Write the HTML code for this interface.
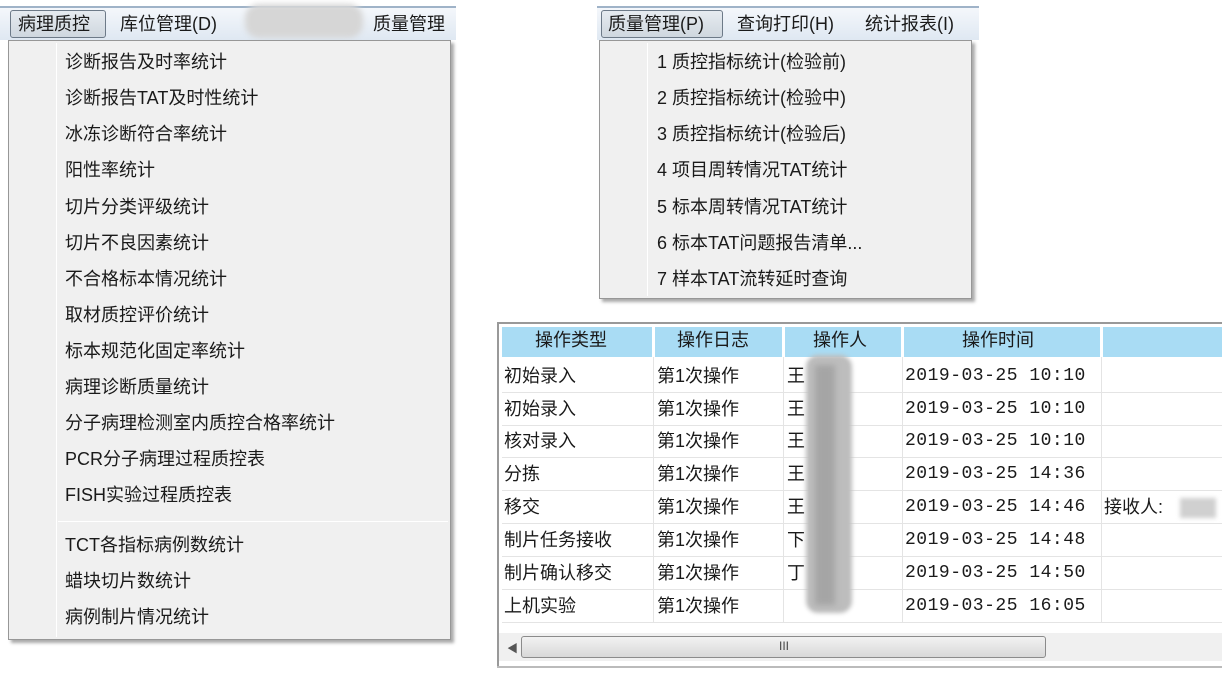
<!DOCTYPE html>
<html><head><meta charset="utf-8"><style>
*{margin:0;padding:0;box-sizing:border-box}
body{width:1222px;height:675px;background:#fff;position:relative;overflow:hidden;font-family:"Liberation Sans","Noto Sans CJK SC",sans-serif;color:#1a1a1a}
.a{position:absolute;white-space:nowrap}
.bar{position:absolute;background:linear-gradient(#f4f7fb,#dfe8f2);border-top:2px solid #9fb3c8}
.btn{position:absolute;border:1px solid #6d7a88;border-radius:3px;background:linear-gradient(#e6ebf0,#cfd7df)}
.menu{position:absolute;background:#f0f0f0;border:1px solid #979797;box-shadow:3px 3px 3px #aaa}
.gut{position:absolute;top:2px;bottom:2px;width:1px;background:#e0e0e0;border-right:1px solid #fff}
.mi{position:absolute;font-size:18px;line-height:22px}
.t{font-size:18px;line-height:22px}
.m{font-family:"Liberation Mono",monospace;font-size:18px;line-height:22px;letter-spacing:0.5px}
.r{position:absolute;left:502px;width:720px;height:33px}
.r div{position:absolute;top:0;white-space:nowrap;font-size:18px;line-height:22px}
</style></head><body>
<div class="bar" style="left:0;top:6px;width:456px;height:34px"></div>
<div class="btn" style="left:10px;top:10px;width:96px;height:28px"></div>
<div class="a t" style="left:18px;top:13px">病理质控</div>
<div class="a t" style="left:120px;top:13px">库位管理(D)</div>
<div class="a" style="left:245px;top:4px;width:118px;height:34px;background:#d6d6d6;border-radius:14px;filter:blur(3px)"></div>
<div class="a t" style="left:373px;top:13px">质量管理</div>
<div class="menu" style="left:8px;top:40px;width:443px;height:600px">
<div class="gut" style="left:47px"></div>
<div class="a" style="left:49px;top:480px;right:2px;height:1px;background:#d6d6d6;border-bottom:1px solid #fff"></div>
<div class="mi" style="left:56px;top:10px">诊断报告及时率统计</div>
<div class="mi" style="left:56px;top:46px">诊断报告TAT及时性统计</div>
<div class="mi" style="left:56px;top:82px">冰冻诊断符合率统计</div>
<div class="mi" style="left:56px;top:118px">阳性率统计</div>
<div class="mi" style="left:56px;top:155px">切片分类评级统计</div>
<div class="mi" style="left:56px;top:191px">切片不良因素统计</div>
<div class="mi" style="left:56px;top:227px">不合格标本情况统计</div>
<div class="mi" style="left:56px;top:263px">取材质控评价统计</div>
<div class="mi" style="left:56px;top:299px">标本规范化固定率统计</div>
<div class="mi" style="left:56px;top:335px">病理诊断质量统计</div>
<div class="mi" style="left:56px;top:371px">分子病理检测室内质控合格率统计</div>
<div class="mi" style="left:56px;top:407px">PCR分子病理过程质控表</div>
<div class="mi" style="left:56px;top:443px">FISH实验过程质控表</div>
<div class="mi" style="left:56px;top:493px">TCT各指标病例数统计</div>
<div class="mi" style="left:56px;top:529px">蜡块切片数统计</div>
<div class="mi" style="left:56px;top:565px">病例制片情况统计</div>
</div>
<div class="bar" style="left:597px;top:6px;width:382px;height:34px"></div>
<div class="btn" style="left:601px;top:10px;width:122px;height:28px"></div>
<div class="a t" style="left:608px;top:13px">质量管理(P)</div>
<div class="a t" style="left:737px;top:13px">查询打印(H)</div>
<div class="a t" style="left:865px;top:13px">统计报表(I)</div>
<div class="menu" style="left:599px;top:40px;width:373px;height:259px">
<div class="gut" style="left:47px"></div>
<div class="mi" style="left:57px;top:10px">1 质控指标统计(检验前)</div>
<div class="mi" style="left:57px;top:46px">2 质控指标统计(检验中)</div>
<div class="mi" style="left:57px;top:82px">3 质控指标统计(检验后)</div>
<div class="mi" style="left:57px;top:118px">4 项目周转情况TAT统计</div>
<div class="mi" style="left:57px;top:155px">5 标本周转情况TAT统计</div>
<div class="mi" style="left:57px;top:191px">6 标本TAT问题报告清单...</div>
<div class="mi" style="left:57px;top:227px">7 样本TAT流转延时查询</div>
</div>
<div class="a" style="left:497px;top:322px;width:725px;height:346px;border:2px solid #999;border-right:none;background:#fff"></div>
<div class="a" style="left:502px;top:327px;width:150px;height:30px;background:#a9dcf4"></div>
<div class="a" style="left:655px;top:327px;width:127px;height:30px;background:#a9dcf4"></div>
<div class="a" style="left:785px;top:327px;width:116px;height:30px;background:#a9dcf4"></div>
<div class="a" style="left:904px;top:327px;width:196px;height:30px;background:#a9dcf4"></div>
<div class="a" style="left:1103px;top:327px;width:119px;height:30px;background:#a9dcf4"></div>
<div class="a t" style="left:535px;top:329px">操作类型</div>
<div class="a t" style="left:677px;top:329px">操作日志</div>
<div class="a t" style="left:813px;top:329px">操作人</div>
<div class="a t" style="left:962px;top:329px">操作时间</div>
<div class="a" style="left:653px;top:357px;width:1px;height:265px;background:#e4e4e4"></div>
<div class="a" style="left:783px;top:357px;width:1px;height:265px;background:#e4e4e4"></div>
<div class="a" style="left:902px;top:357px;width:1px;height:265px;background:#e4e4e4"></div>
<div class="a" style="left:1101px;top:357px;width:1px;height:265px;background:#e4e4e4"></div>
<div class="a" style="left:502px;top:392px;width:720px;height:1px;background:#e4e4e4"></div>
<div class="a" style="left:502px;top:425px;width:720px;height:1px;background:#e4e4e4"></div>
<div class="a" style="left:502px;top:457px;width:720px;height:1px;background:#e4e4e4"></div>
<div class="a" style="left:502px;top:490px;width:720px;height:1px;background:#e4e4e4"></div>
<div class="a" style="left:502px;top:523px;width:720px;height:1px;background:#e4e4e4"></div>
<div class="a" style="left:502px;top:556px;width:720px;height:1px;background:#e4e4e4"></div>
<div class="a" style="left:502px;top:589px;width:720px;height:1px;background:#e4e4e4"></div>
<div class="a" style="left:502px;top:622px;width:720px;height:1px;background:#e4e4e4"></div>

<div class="r" style="top:365px"><div style="left:2px">初始录入</div><div style="left:155px">第1次操作</div><div style="left:285px">王</div><div class="m" style="left:403px">2019-03-25 10:10</div></div>
<div class="r" style="top:398px"><div style="left:2px">初始录入</div><div style="left:155px">第1次操作</div><div style="left:285px">王</div><div class="m" style="left:403px">2019-03-25 10:10</div></div>
<div class="r" style="top:430px"><div style="left:2px">核对录入</div><div style="left:155px">第1次操作</div><div style="left:285px">王</div><div class="m" style="left:403px">2019-03-25 10:10</div></div>
<div class="r" style="top:463px"><div style="left:2px">分拣</div><div style="left:155px">第1次操作</div><div style="left:285px">王</div><div class="m" style="left:403px">2019-03-25 14:36</div></div>
<div class="r" style="top:496px"><div style="left:2px">移交</div><div style="left:155px">第1次操作</div><div style="left:285px">王</div><div class="m" style="left:403px">2019-03-25 14:46</div><div style="left:602px">接收人:</div></div>
<div class="r" style="top:529px"><div style="left:2px">制片任务接收</div><div style="left:155px">第1次操作</div><div style="left:285px">下</div><div class="m" style="left:403px">2019-03-25 14:48</div></div>
<div class="r" style="top:562px"><div style="left:2px">制片确认移交</div><div style="left:155px">第1次操作</div><div style="left:285px">丁</div><div class="m" style="left:403px">2019-03-25 14:50</div></div>
<div class="r" style="top:595px"><div style="left:2px">上机实验</div><div style="left:155px">第1次操作</div><div class="m" style="left:403px">2019-03-25 16:05</div></div>

<div class="a" style="left:806px;top:355px;width:46px;height:258px;background:#bdbdbd;border-radius:12px;filter:blur(2px)"></div>
<div class="a" style="left:815px;top:365px;width:20px;height:240px;background:#a5a5a5;filter:blur(3px)"></div>
<div class="a" style="left:1180px;top:498px;width:36px;height:20px;background:#d0d0d0;filter:blur(2px)"></div>
<div class="a" style="left:499px;top:633px;width:723px;height:28px;background:#f0f0f0"></div>
<div class="a" style="left:507px;top:640px;font-size:11px;color:#555">◀</div>
<div class="a" style="left:521px;top:636px;width:525px;height:22px;border:1px solid #8b8b8b;border-radius:3px;background:linear-gradient(#f2f2f2,#d8d8d8)"></div>
<div class="a" style="left:779px;top:639px;font-size:12px;color:#444">III</div>
<div class="a" style="left:497px;top:666px;width:725px;height:2px;background:#bbb"></div>
</body></html>
